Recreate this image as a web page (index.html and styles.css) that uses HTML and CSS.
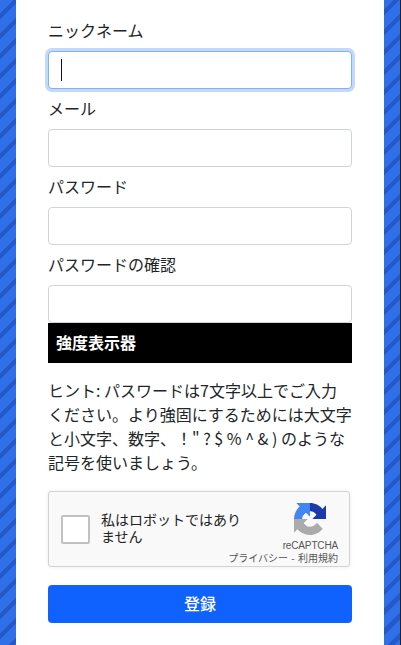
FILE: index.html
```html
<!DOCTYPE html>
<html lang="ja">
<head>
<meta charset="utf-8">
<title>登録</title>
<link rel="stylesheet" href="styles.css">
</head>
<body>
<div class="backdrop">
  <main class="panel">
    <form class="form">
      <div class="field">
        <label class="label">ニックネーム</label>
        <div class="input input-focus"><span class="caret"></span></div>
      </div>
      <div class="field">
        <label class="label">メール</label>
        <div class="input"></div>
      </div>
      <div class="field">
        <label class="label">パスワード</label>
        <div class="input"></div>
      </div>
      <div class="field field-tight">
        <label class="label">パスワードの確認</label>
        <div class="input"></div>
      </div>
      <div class="strength">強度表示器</div>
      <p class="hint">ヒント: パスワードは7文字以上でご入力ください。より強固にするためには大文字と小文字、数字、！" ? $ % ^ &amp; ) のような記号を使いましょう。</p>
      <div class="captcha">
        <span class="check"></span>
        <span class="captcha-text">私はロボットではありません</span>
        <div class="captcha-brand">
          <svg class="captcha-logo" viewBox="0 0 64 64" width="32" height="32">
            <path fill="#1c3aa9" d="M64 31.955l-.033-1.37V4.687l-7.16 7.16C50.948 4.674 42.033.093 32.05.093c-10.4 0-19.622 4.96-25.458 12.64l11.736 11.86a15.55 15.55 0 0 1 4.754-5.334c2.05-1.6 4.952-2.906 8.968-2.906.485 0 .86.057 1.135.163 4.976.393 9.288 3.14 11.828 7.124l-8.307 8.307 32.29.003"/>
            <path fill="#4285f4" d="M31.862.094l-1.37.033H4.594l7.16 7.16C4.58 13.147 0 22.06 0 32.046c0 10.4 4.96 19.622 12.64 25.458l11.86-11.736a15.55 15.55 0 0 1-5.334-4.754c-1.6-2.05-2.906-4.952-2.906-8.968 0-.485.057-.86.163-1.135.393-4.976 3.14-9.288 7.124-11.828l8.307 8.307.003-32.29"/>
            <path fill="#ababab" d="M.001 32.045l.033 1.37v25.898l7.16-7.16c5.86 7.173 14.773 11.754 24.76 11.754 10.4 0 19.622-4.96 25.458-12.64l-11.736-11.86a15.55 15.55 0 0 1-4.754 5.334c-2.05 1.6-4.952 2.906-8.968 2.906-.485 0-.86-.057-1.135-.163-4.976-.393-9.288-3.14-11.828-7.124l8.307-8.307-32.29-.003"/>
          </svg>
          <span class="captcha-name">reCAPTCHA</span>
          <span class="captcha-links">プライバシー - 利用規約</span>
        </div>
      </div>
      <button type="button" class="submit">登録</button>
    </form>
  </main>
</div>
</body>
</html>
```
FILE: styles.css
```css
* { box-sizing: border-box; }
html, body { margin: 0; padding: 0; height: 645px; overflow: hidden; background: #222; }
body { font-family: "Noto Sans CJK JP", "Noto Sans", "Liberation Sans", sans-serif; color: #212529; font-size: 16px; line-height: 24px; }
.backdrop {
  width: 400px; height: 645px; padding: 0 16px;
  background: repeating-linear-gradient(-45deg, #2f6fe8 0, #2f6fe8 4.24px, #2359c9 4.24px, #2359c9 8.49px, #2f6fe8 8.49px, #2f6fe8 14.14px);
}
.panel { background: #fff; height: 645px; padding: 19px 32px 0; }
.form { display: flex; flex-direction: column; }
.field { margin-bottom: 8px; display: flex; flex-direction: column; gap: 8px; }
.field-tight { margin-bottom: 0; }
.label { display: block; height: 24px; line-height: 22px; }
.input { height: 38px; background: #fff; border: 1px solid #ced4da; border-radius: 4px; display: flex; align-items: center; padding: 0 12px; }
.input-focus { border-color: #80b0f5; box-shadow: 0 0 0 3px #c2d8fc; }
.caret { width: 1px; height: 22px; background: #111; }
.strength { height: 40px; background: #000; color: #fff; font-weight: 700; font-size: 16px; padding: 8px; line-height: 22px; }
.hint { margin: 15px 0 17px; }
.captcha { width: 302px; height: 76px; background: #f9f9f9; border: 1px solid #d3d3d3; border-radius: 3px; box-shadow: 0 0 4px rgba(0,0,0,.08); display: flex; align-items: center; position: relative; padding: 0 0 3px 12px; }
.check { flex: none; width: 29px; height: 29px; margin-top: 3px; background: #fff; border: 2px solid #c1c1c1; border-radius: 2px; }
.captcha-text { width: 150px; margin-left: 11px; font-size: 14px; line-height: 17px; color: #222; }
.captcha-brand { position: absolute; right: 11px; top: 11px; bottom: 0; display: flex; flex-direction: column; align-items: flex-end; }
.captcha-logo { margin-right: 12px; }
.captcha-name { font-family: "Liberation Sans", sans-serif; font-size: 10px; line-height: 12px; margin-top: 5px; letter-spacing: -.15px; color: #555; }
.captcha-links { font-size: 10px; line-height: 12px; margin-top: 0; color: #555; white-space: nowrap; word-spacing: 1px; }
.submit { margin-top: 18px; height: 38px; width: 304px; padding: 0 0 2px; background: #0f62fe; color: #fff; border: 0; border-radius: 4px; font: 500 16px/24px "Noto Sans CJK JP", sans-serif; }
```
